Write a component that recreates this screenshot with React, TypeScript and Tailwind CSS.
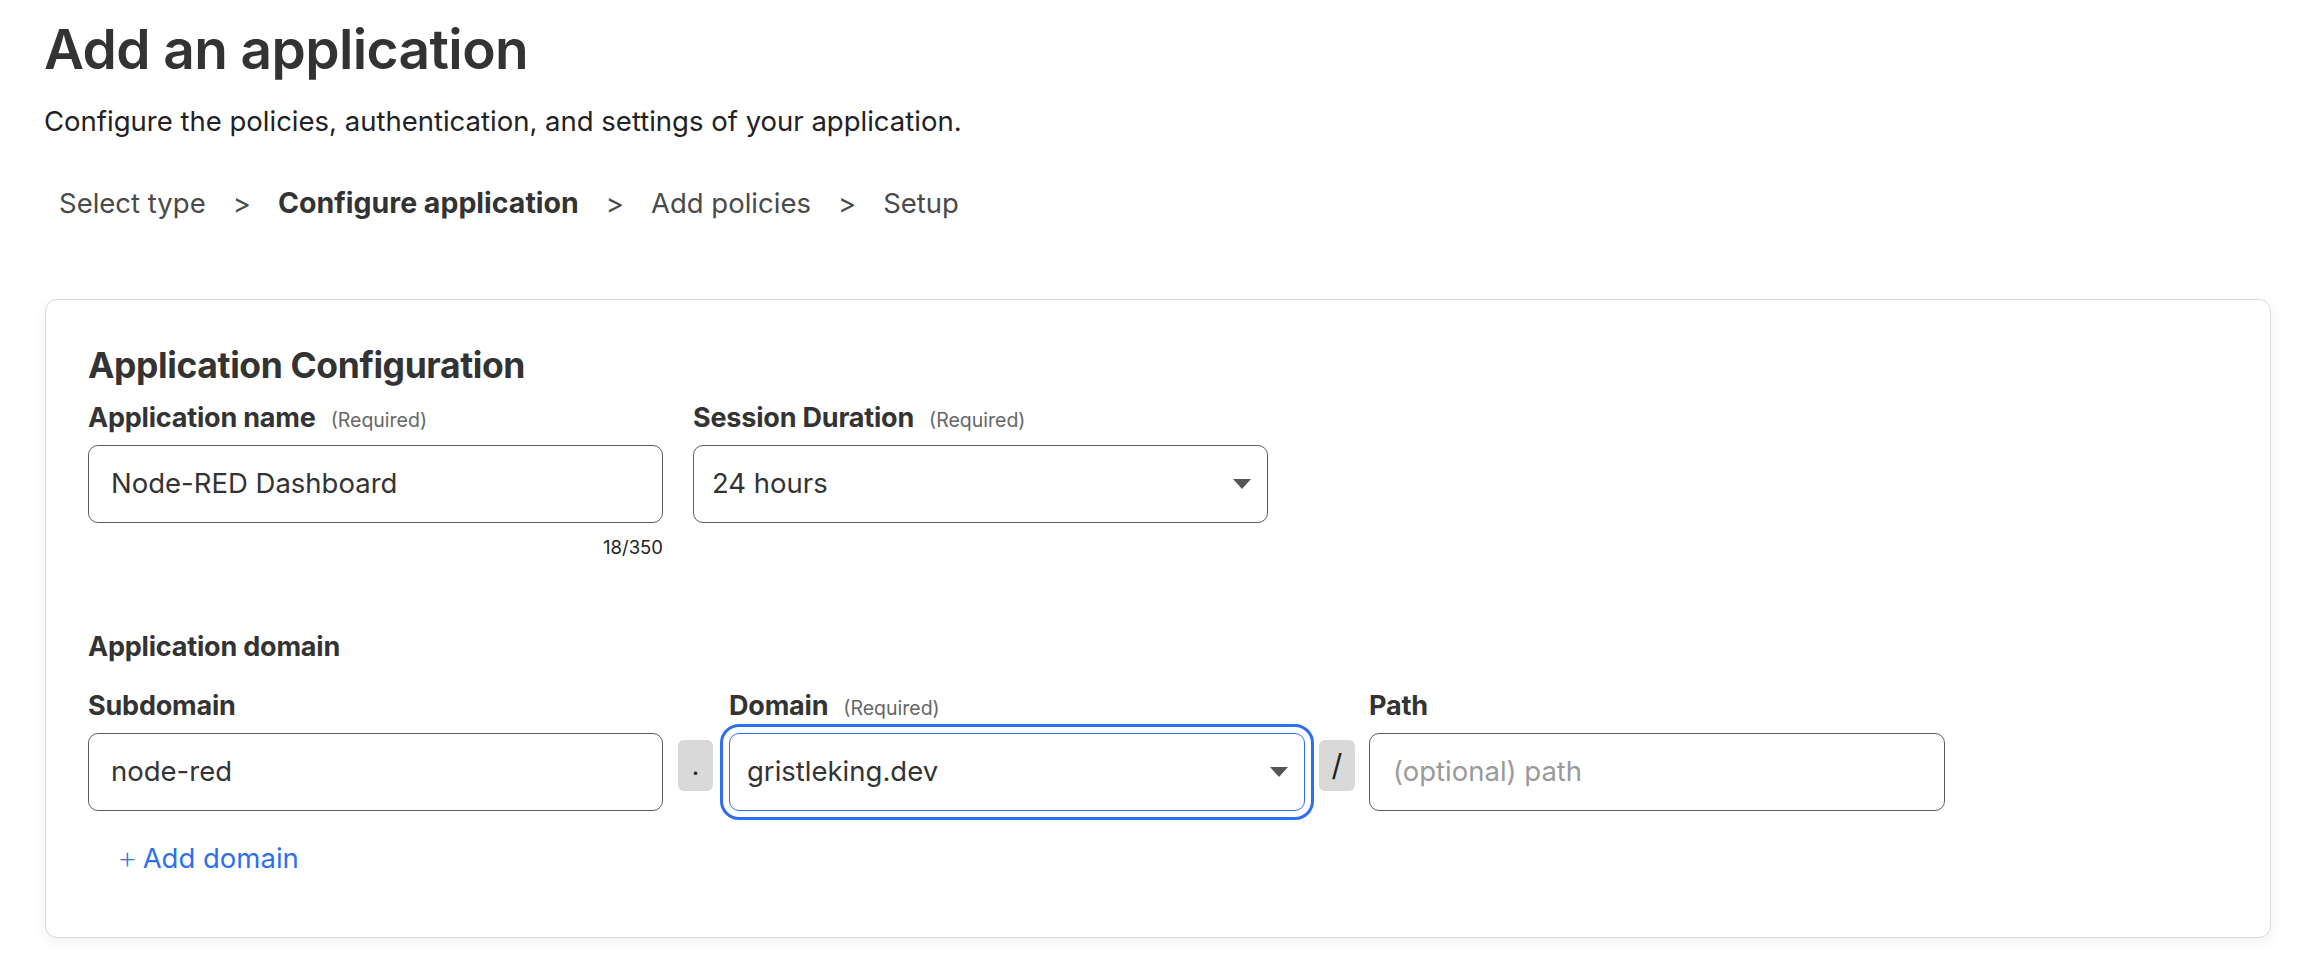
import React from "react";

function Caret() {
  return (
    <svg width="18" height="10" viewBox="0 0 18 10" className="shrink-0">
      <path d="M0 0 L18 0 L9 10 Z" fill="#555555" />
    </svg>
  );
}

function Label({ text, required }: { text: string; required?: boolean }) {
  return (
    <div className="flex items-baseline gap-[15px] h-[30px] leading-[30px]">
      <span className="text-[27px] font-bold text-[#333333] tracking-[-0.2px]">{text}</span>
      {required && <span className="text-[19.5px] text-[#666666]">(Required)</span>}
    </div>
  );
}

export default function App() {
  return (
    <div
      className="min-h-screen bg-white text-[#333333]"
      style={{ fontFamily: "Inter, 'Noto Sans', 'Liberation Sans', sans-serif" }}
    >
      <div className="pl-[44px] pt-[21px]">
        <h1 className="text-[55px] leading-[57px] font-semibold text-[#333333] tracking-[-0.6px]">
          Add an application
        </h1>
        <p className="mt-[28px] text-[27.5px] leading-[30px] text-[#222222]">
          Configure the policies, authentication, and settings of your application.
        </p>
        <nav className="mt-[51px] pl-[15px] flex items-center gap-[27px] text-[27.5px] leading-[32px] text-[#4a4a4a]">
          <span>Select type</span>
          <span>&gt;</span>
          <span className="font-bold text-[28.5px] text-[#333333]">Configure application</span>
          <span>&gt;</span>
          <span>Add policies</span>
          <span>&gt;</span>
          <span>Setup</span>
        </nav>
      </div>

      <div className="ml-[45px] mt-[80px] w-[2226px] rounded-[12px] border border-[#d9d9d9] bg-white shadow-[0_4px_14px_rgba(0,0,0,0.06)] pl-[42px] pt-[47px] pb-[64px]">
        <h2 className="text-[35.5px] leading-[38px] font-bold text-[#333333] tracking-[-0.4px]">
          Application Configuration
        </h2>

        <div className="mt-[18px] flex gap-[30px]">
          <div className="w-[575px]">
            <Label text="Application name" required />
            <div className="mt-[12px] h-[78px] rounded-[10px] border border-[#5c5c5c] flex items-center px-[22px] text-[27.5px] text-[#333333]">
              Node-RED Dashboard
            </div>
            <div className="mt-[14px] h-[20px] leading-[20px] text-right text-[18.5px] text-[#222222]">18/350</div>
          </div>
          <div className="w-[575px]">
            <Label text="Session Duration" required />
            <div className="mt-[12px] h-[78px] rounded-[10px] border border-[#5c5c5c] flex items-center justify-between pl-[18px] pr-[16px] text-[27.5px] text-[#333333]">
              <span>24 hours</span>
              <Caret />
            </div>
          </div>
        </div>

        <div className="mt-[75px] h-[30px] leading-[30px] text-[27px] font-bold text-[#333333] tracking-[-0.2px]">
          Application domain
        </div>

        <div className="mt-[29px] flex items-start">
          <div className="w-[575px]">
            <Label text="Subdomain" />
            <div className="mt-[12px] h-[78px] rounded-[10px] border border-[#5c5c5c] flex items-center px-[22px] text-[27.5px] text-[#333333]">
              node-red
            </div>
          </div>
          <div className="ml-[15px] mt-[49px] w-[35px] h-[51px] rounded-[6px] bg-[#d9d9d9] flex items-center justify-center text-[26px] text-[#222222]">
            .
          </div>
          <div className="ml-[16px] w-[576px]">
            <Label text="Domain" required />
            <div className="mt-[12px] h-[78px] rounded-[10px] border border-[#2f6fef] outline-[3px] outline-solid outline-offset-[6px] outline-[#2f6fef] flex items-center justify-between pl-[17px] pr-[16px] text-[27.5px] text-[#333333]">
              <span>gristleking.dev</span>
              <Caret />
            </div>
          </div>
          <div className="ml-[14px] mt-[49px] w-[36px] h-[51px] rounded-[6px] bg-[#d9d9d9] flex items-center justify-center text-[30px] text-[#222222]">
            /
          </div>
          <div className="ml-[14px] w-[576px]">
            <Label text="Path" />
            <div className="mt-[12px] h-[78px] rounded-[10px] border border-[#5c5c5c] flex items-center px-[23px] text-[27.5px] text-[#9a9a9a]">
              (optional) path
            </div>
          </div>
        </div>

        <div className="mt-[32px] ml-[29px] h-[30px] flex items-center gap-[5px] text-[27.5px] leading-[30px] text-[#2f6fef]">
          <span className="font-extralight text-[32px]">+</span>
          <span>Add domain</span>
        </div>
      </div>
    </div>
  );
}
